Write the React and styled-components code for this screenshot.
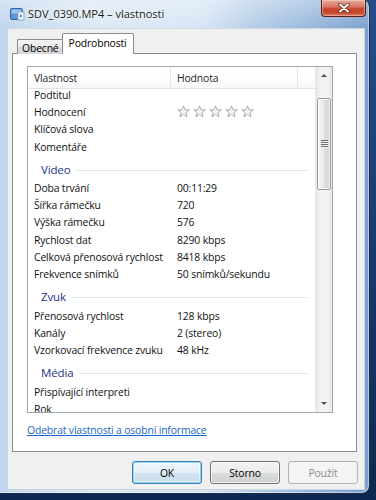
import styled, { createGlobalStyle, css } from 'styled-components'

const GlobalStyle = createGlobalStyle`
  html, body { margin: 0; padding: 0; }
  body {
    width: 376px;
    height: 500px;
    overflow: hidden;
    background: linear-gradient(180deg, #244f8c 0%, #15396d 55%, #0d2850 100%);
    font-family: "Open Sans", "Noto Sans", sans-serif;
    font-size: 10.4px;
    letter-spacing: -0.15px;
    color: #000;
  }
  * { box-sizing: border-box; }
`;

const Window = styled.div`
  width: 370px;
  height: 494px;
  display: flex;
  flex-direction: column;
  border-right: 1px solid #1b2d48;
  border-bottom: 1px solid #1b2d48;
  border-radius: 0 7px 8px 0;
  background:
    linear-gradient(180deg, rgba(255,255,255,0.35) 0%, rgba(255,255,255,0) 6%),
    linear-gradient(90deg, #bfd5ec 0%, #dbe8f5 25%, #d6e5f4 55%, #b2cbe6 70%, #98b7dc 84%, #7b9fcb 100%);
  box-shadow: inset -1px -1px 0 rgba(255,255,255,0.45);
`;

const TitleBar = styled.div`
  height: 28px;
  display: flex;
  align-items: flex-start;
  padding-left: 9px;
`;

const TitleIcon = styled.svg`
  width: 16px;
  height: 16px;
  margin-top: 6px;
  flex: none;
`;

const TitleText = styled.div`
  margin-left: 3px;
  margin-top: 6px;
  font-size: 11px;
  letter-spacing: 0;
  color: #1a1a1a;
  text-shadow: 0 0 6px #fff, 0 0 3px #fff;
  white-space: nowrap;
`;

const CloseButton = styled.div`
  margin-left: auto;
  margin-right: 3px;
  width: 45px;
  height: 17px;
  border: 1px solid #5a1e14;
  border-top: none;
  border-radius: 0 0 4px 4px;
  background: linear-gradient(180deg, #e9a898 0%, #d97a68 40%, #c8452f 55%, #c94a33 80%, #dd7a5a 100%);
  box-shadow: inset 0 0 0 1px rgba(255,255,255,0.35);
  display: flex;
  align-items: center;
  justify-content: center;
`;

const Client = styled.div`
  flex: 1;
  margin: 0 4px 3px 7px;
  background: #f0f0f0;
  border: 1px solid #c9d6e4;
  display: flex;
  flex-direction: column;
  padding: 0 6px 0 4px;
`;

const TabStrip = styled.div`
  height: 21px;
  margin-top: 4px;
  margin-bottom: -1px;
  display: flex;
  align-items: flex-end;
  padding-left: 5px;
  position: relative;
  z-index: 1;
`;

const Tab = styled.div`
  border: 1px solid #898c95;
  border-bottom: none;
  display: flex;
  align-items: center;
  white-space: nowrap;
  ${p => p.$active ? css`
    height: 21px;
    padding: 0 6px 3px 6px;
    margin-left: -1px;
    background: #fff;
    border-radius: 2px 2px 0 0;
  ` : css`
    height: 15px;
    padding: 1px 4px 0 4px;
    background: linear-gradient(180deg, #f3f3f3 0%, #ebebeb 50%, #dcdcdc 51%, #d6d6d6 100%);
    border-right: none;
    border-radius: 2px 0 0 0;
  `}
`;

const Panel = styled.div`
  height: 399px;
  margin-right: 1px;
  background: #fff;
  border: 1px solid #898c95;
  padding: 12px 0 0 14px;
  display: flex;
  flex-direction: column;
`;

const ListBox = styled.div`
  width: 306px;
  height: 347px;
  border: 1px solid #a3a7ad;
  display: flex;
  overflow: hidden;
`;

const ListMain = styled.div`
  flex: 1;
  display: flex;
  flex-direction: column;
  min-width: 0;
`;

const Header = styled.div`
  height: 22px;
  flex: none;
  display: flex;
  background: linear-gradient(180deg, #ffffff 0%, #ffffff 50%, #f6f7f9 100%);
  border-bottom: 1px solid #dfe3e8;
`;

const HeaderCell = styled.div`
  width: ${p => p.$w ? `${p.$w}px` : 'auto'};
  flex: ${p => p.$w ? 'none' : 1};
  padding-left: 6px;
  display: flex;
  align-items: center;
  color: #1e1e1e;
  border-right: ${p => p.$w ? '1px solid #e3e6ea' : 'none'};
`;

const Body = styled.div`
  flex: 1;
  overflow: hidden;
`;

const Rows = styled.div`
  margin-top: -3px;
`;

const Row = styled.div`
  height: 17.3px;
  display: flex;
  align-items: center;
  white-space: nowrap;
`;

const NameCell = styled.div`
  width: 143px;
  flex: none;
  padding-left: 6px;
  color: #111;
`;

const ValueCell = styled.div`
  flex: 1;
  padding-left: 6px;
  color: #111;
  display: flex;
  align-items: center;
`;

const GroupRow = styled.div`
  height: 24px;
  display: flex;
  align-items: center;
  padding: 4px 8px 0 13px;
`;

const GroupLabel = styled.div`
  color: #1e3287;
  font-size: 11.5px;
`;

const GroupLine = styled.div`
  flex: 1;
  height: 1px;
  margin-left: 6px;
  margin-top: 2px;
  background: #dfe5ee;
`;

const Stars = styled.div`
  display: flex;
  gap: 3px;
`;

const ScrollBar = styled.div`
  width: 17px;
  flex: none;
  display: flex;
  flex-direction: column;
  background: linear-gradient(90deg, #e4e4e4 0%, #f3f3f3 25%, #f3f3f3 75%, #e6e6e6 100%);
  border-left: 1px solid #eaeaea;
`;

const ArrowButton = styled.div`
  height: 17px;
  flex: none;
  display: flex;
  align-items: center;
  justify-content: center;
  &::after {
    content: "";
    border-left: 3px solid transparent;
    border-right: 3px solid transparent;
    ${p => p.$down
      ? css`border-top: 3px solid #555;`
      : css`border-bottom: 3px solid #555;`}
  }
`;

const Track = styled.div`
  flex: 1;
  padding: 14px 1px 0 1px;
`;

const Thumb = styled.div`
  height: 92px;
  border: 1px solid #9a9a9a;
  border-radius: 2px;
  background: linear-gradient(90deg, #f5f5f5 0%, #ececec 45%, #dedede 55%, #d3d3d3 100%);
  box-shadow: inset 0 0 0 1px rgba(255,255,255,0.7);
  display: flex;
  align-items: center;
  justify-content: center;
`;

const Grip = styled.div`
  width: 7px;
  height: 8px;
  background: repeating-linear-gradient(180deg, #6e6e6e 0px, #6e6e6e 1px, #f4f4f4 1px, #f4f4f4 2px);
`;

const Link = styled.a`
  margin-top: 10px;
  color: #1565c8;
  text-decoration: underline;
  align-self: flex-start;
  cursor: pointer;
`;

const ButtonRow = styled.div`
  margin-top: 9px;
  display: flex;
  justify-content: flex-end;
  gap: 8px;
`;

const Button = styled.button`
  width: 70px;
  height: 23px;
  padding: 0;
  font-family: inherit;
  font-size: 10.4px;
  letter-spacing: -0.15px;
  color: #000;
  border: 1px solid #707070;
  border-radius: 3px;
  background: linear-gradient(180deg, #f2f2f2 0%, #ebebeb 50%, #dddddd 51%, #cfcfcf 100%);
  box-shadow: inset 0 0 0 1px rgba(255,255,255,0.75);
  ${p => p.$default && css`
    border-color: #3c7fb1;
    background: linear-gradient(180deg, #eef6fb 0%, #e3eef6 50%, #d3e5f1 51%, #c6dcec 100%);
    box-shadow: inset 0 0 0 1px #93d2f2, inset 0 0 0 2px rgba(255,255,255,0.5);
  `}
  &:disabled {
    color: #8b8b8b;
    border-color: #adb2b5;
    background: #f4f4f4;
    box-shadow: none;
  }
`;

const Star = () => (
  <svg width="13" height="13" viewBox="0 0 13 13">
    <polygon
      points="6.5,0.8 7.97,4.78 12.21,4.95 8.88,7.57 10.03,11.65 6.5,9.3 2.97,11.65 4.12,7.57 0.79,4.95 5.03,4.78"
      fill="#f8f8f8"
      stroke="#a9a9a9"
      strokeWidth="1"
      strokeLinejoin="round"
    />
  </svg>
);

const items = [
  { name: 'Podtitul' },
  { name: 'Hodnocení', stars: true },
  { name: 'Klíčová slova' },
  { name: 'Komentáře' },
  { group: 'Video' },
  { name: 'Doba trvání', value: '00:11:29' },
  { name: 'Šířka rámečku', value: '720' },
  { name: 'Výška rámečku', value: '576' },
  { name: 'Rychlost dat', value: '8290 kbps' },
  { name: 'Celková přenosová rychlost', value: '8418 kbps' },
  { name: 'Frekvence snímků', value: '50 snímků/sekundu' },
  { group: 'Zvuk' },
  { name: 'Přenosová rychlost', value: '128 kbps' },
  { name: 'Kanály', value: '2 (stereo)' },
  { name: 'Vzorkovací frekvence zvuku', value: '48 kHz' },
  { group: 'Média' },
  { name: 'Přispívající interpreti' },
  { name: 'Rok' },
];

const App = () => {
  return (
    <>
      <GlobalStyle />
      <Window>
        <TitleBar>
          <TitleIcon viewBox="0 0 16 16">
            <rect x="1.5" y="2.5" width="12" height="11" rx="1.5" fill="#5b97d6" stroke="#2f64a8" />
            <rect x="2.5" y="3.5" width="10" height="4" fill="#9cc6ee" />
            <path d="M9 6 L15 6 L15 14 L9 14 Z" fill="#f4f8fc" stroke="#7a9cc0" strokeWidth="0.8" />
            <path d="M11 8.3 L13.4 10 L11 11.7 Z" fill="#2f6fbe" />
          </TitleIcon>
          <TitleText>SDV_0390.MP4 – vlastnosti</TitleText>
          <CloseButton>
            <svg width="12" height="10" viewBox="0 0 12 10">
              <path d="M2 1.5 L10 8.5 M10 1.5 L2 8.5" stroke="#5a2118" strokeWidth="3.6" strokeLinecap="round" />
              <path d="M2 1.5 L10 8.5 M10 1.5 L2 8.5" stroke="#fff" strokeWidth="2" strokeLinecap="round" />
            </svg>
          </CloseButton>
        </TitleBar>
        <Client>
          <TabStrip>
            <Tab>Obecné</Tab>
            <Tab $active>Podrobnosti</Tab>
          </TabStrip>
          <Panel>
            <ListBox>
              <ListMain>
                <Header>
                  <HeaderCell $w={143}>Vlastnost</HeaderCell>
                  <HeaderCell $w={127}>Hodnota</HeaderCell>
                  <HeaderCell />
                </Header>
                <Body>
                  <Rows>
                    {items.map((item, i) => item.group ? (
                      <GroupRow key={i}>
                        <GroupLabel>{item.group}</GroupLabel>
                        <GroupLine />
                      </GroupRow>
                    ) : (
                      <Row key={i}>
                        <NameCell>{item.name}</NameCell>
                        <ValueCell>
                          {item.stars ? (
                            <Stars>
                              {[0, 1, 2, 3, 4].map(s => <Star key={s} />)}
                            </Stars>
                          ) : item.value}
                        </ValueCell>
                      </Row>
                    ))}
                  </Rows>
                </Body>
              </ListMain>
              <ScrollBar>
                <ArrowButton />
                <Track>
                  <Thumb><Grip /></Thumb>
                </Track>
                <ArrowButton $down />
              </ScrollBar>
            </ListBox>
            <Link>Odebrat vlastnosti a osobní informace</Link>
          </Panel>
          <ButtonRow>
            <Button $default>OK</Button>
            <Button>Storno</Button>
            <Button disabled>Použít</Button>
          </ButtonRow>
        </Client>
      </Window>
    </>
  )
}

export default App
